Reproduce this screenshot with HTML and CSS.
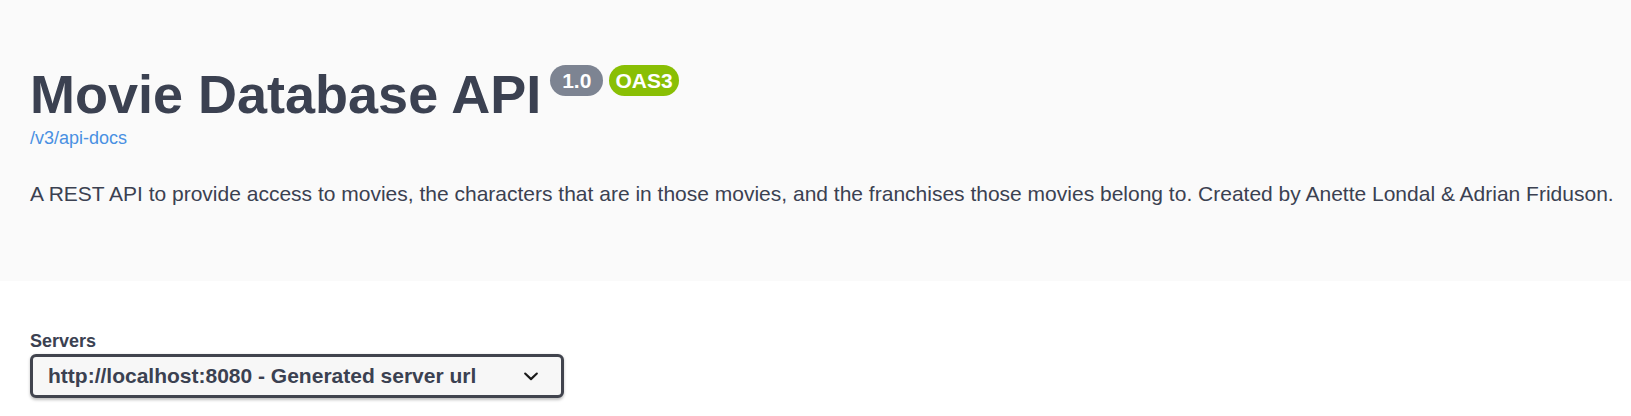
FILE: index.html
```html
<!DOCTYPE html>
<html lang="en">
<head>
<meta charset="utf-8">
<title>Movie Database API</title>
<link rel="stylesheet" href="styles.css">
</head>
<body>
  <section class="info-container">
    <div class="title-row">
      <h2 class="title">Movie Database API</h2>
      <span class="badge badge-version">1.0</span>
      <span class="badge badge-oas">OAS3</span>
    </div>
    <a class="url" href="#">/v3/api-docs</a>
    <p class="description">A REST API to provide access to movies, the characters that are in those movies, and the franchises those movies belong to. Created by Anette Londal &amp; Adrian Friduson.</p>
  </section>
  <section class="scheme-container">
    <div class="servers-title">Servers</div>
    <div class="select">
      <span class="select-text">http://localhost:8080 - Generated server url</span>
      <svg class="select-arrow" width="30" height="30" viewBox="0 0 20 20" aria-hidden="true">
        <path d="M13.418 7.859a.695.695 0 01.978 0 .68.68 0 010 .969l-3.908 3.830a.697.697 0 01-.979 0l-3.908-3.830a.68.68 0 010-.969.695.695 0 01.978 0L10 11l3.418-3.141z" fill="#1b1b1b"/>
      </svg>
    </div>
  </section>
</body>
</html>
```

FILE: styles.css
```css
html, body {
  margin: 0;
  padding: 0;
  background: #fff;
  font-family: "Liberation Sans", Arial, sans-serif;
  color: #3b4151;
}

.info-container {
  background: #fafafa;
  padding: 63px 30px 75px;
}

.title-row {
  display: flex;
  align-items: flex-start;
}

.title {
  margin: 0;
  font-size: 54px;
  line-height: 62px;
  font-weight: 700;
  color: #3b4151;
}

.badge {
  margin-top: 2px;
  font-size: 21px;
  line-height: 25px;
  font-weight: 700;
  color: #fff;
  border-radius: 57px;
  padding: 3px 12px;
}

.badge-version {
  background: #7d8492;
  margin-left: 9px;
}

.badge-oas {
  background: #89bf04;
  margin-left: 6px;
  padding: 3px 6px;
}

.url {
  display: inline-block;
  margin-top: 3px;
  font-size: 18px;
  line-height: 21px;
  color: #4990e2;
  text-decoration: none;
}

.description {
  margin: 33px 0 0;
  font-size: 21px;
  line-height: 24px;
  letter-spacing: 0;
  white-space: nowrap;
  color: #3b4151;
}

.scheme-container {
  padding: 50px 30px 45px;
  background: #fff;
}

.servers-title {
  font-size: 18px;
  line-height: 21px;
  font-weight: 700;
  color: #3b4151;
  margin-bottom: 2px;
}

.select {
  display: inline-flex;
  align-items: center;
  background: #f7f7f7;
  border: 3px solid #41444e;
  border-radius: 6px;
  box-shadow: 0 1.5px 3px 0 rgba(0, 0, 0, 0.25);
  padding: 7px 15px 7px 15px;
}

.select-text {
  font-size: 21px;
  line-height: 24px;
  font-weight: 700;
  color: #3b4151;
}

.select-arrow {
  display: block;
  margin-left: 40px;
  margin-top: -3px;
  margin-bottom: -3px;
}
```
